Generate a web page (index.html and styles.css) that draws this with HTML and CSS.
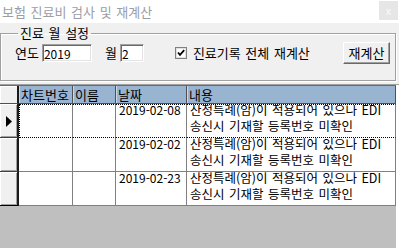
FILE: index.html
```html
<!DOCTYPE html>
<html lang="ko">
<head>
    <meta charset="UTF-8">
    <title>보험 진료비 검사 및 재계산</title>
    <link rel="stylesheet" href="styles.css">
</head>
<body>
    <div class="window">
        <div class="titlebar">
            <span class="title">보험 진료비 검사 및 재계산</span>
            <span class="close">x</span>
        </div>

        <fieldset class="group">
            <legend>진료 월 설정</legend>
            <div class="row">
                <label class="lbl" for="year">연도</label>
                <input type="text" id="year" class="field year" value="2019">
                <label class="lbl month-lbl" for="month">월</label>
                <input type="text" id="month" class="field month" value="2">
                <label class="check">
                    <svg width="12" height="12" viewBox="0 0 12 12">
                        <rect x="0.5" y="0.5" width="11" height="11" fill="#fff" stroke="#808080"/>
                        <rect x="1.5" y="1.5" width="9" height="9" fill="none" stroke="#e0e0e0"/>
                        <polyline points="3,5.5 5,7.8 9.2,3.2" fill="none" stroke="#000" stroke-width="1.8"/>
                    </svg>
                    <span>진료기록 전체 재계산</span>
                </label>
                <button class="btn">재계산</button>
            </div>
        </fieldset>

        <div class="gridwrap">
            <div class="gridarea">
                <div class="grid">
                    <div class="hcell corner"></div>
                    <div class="hcell">차트번호</div>
                    <div class="hcell">이름</div>
                    <div class="hcell">날짜</div>
                    <div class="hcell">내용</div>

                    <div class="ind">
                        <svg width="6" height="11" viewBox="0 0 6 11"><polygon points="0,0 6,5.5 0,11" fill="#000"/></svg>
                    </div>
                    <div class="cell focus sel"></div>
                    <div class="cell sel"></div>
                    <div class="cell sel"><div class="txt date">2019-02-08</div></div>
                    <div class="cell sel"><div class="txt">산정특례(암)이 적용되어 있으나 EDI<br>송신시 기재할 등록번호 미확인</div></div>

                    <div class="ind"></div>
                    <div class="cell"></div>
                    <div class="cell"></div>
                    <div class="cell"><div class="txt date">2019-02-02</div></div>
                    <div class="cell"><div class="txt">산정특례(암)이 적용되어 있으나 EDI<br>송신시 기재할 등록번호 미확인</div></div>

                    <div class="ind last"></div>
                    <div class="cell"></div>
                    <div class="cell"></div>
                    <div class="cell"><div class="txt date">2019-02-23</div></div>
                    <div class="cell"><div class="txt">산정특례(암)이 적용되어 있으나 EDI<br>송신시 기재할 등록번호 미확인</div></div>
                </div>
            </div>
        </div>
    </div>
</body>
</html>
```

FILE: styles.css
```css
* {
    box-sizing: border-box;
    margin: 0;
    padding: 0;
}

body {
    font-family: "Noto Sans CJK KR", "Liberation Sans", sans-serif;
    font-size: 13px;
    line-height: 16px;
    word-spacing: 1px;
    color: #000;
    background-color: #f0f0f0;
}

.window {
    width: 399px;
    height: 248px;
    overflow: hidden;
    display: flex;
    flex-direction: column;
}

/* title bar */
.titlebar {
    height: 23px;
    background: #fff;
    display: flex;
    align-items: center;
    justify-content: space-between;
    padding-left: 2px;
}

.title {
    color: #9a9ea6;
}

.close {
    width: 19px;
    height: 19px;
    margin: 0 1px 3px 0;
    align-self: flex-end;
    background: #e6e6e6;
    color: #fafafa;
    font-size: 11px;
    line-height: 18px;
    text-align: center;
}

/* group box */
.group {
    margin: 2px 3px 0 0;
    min-width: 0;
    border: 1px solid #a0a0a0;
    box-shadow: inset 1px 1px 0 #fff, 1px 1px 0 #fff;
    padding: 1px 5px 16px 14px;
}

.group legend {
    margin-left: 3px;
    padding: 0 2px;
    line-height: 16px;
}

.row {
    display: flex;
    align-items: center;
    height: 22px;
}

.month-lbl {
    margin-left: 13px;
}

.field {
    height: 18px;
    margin-left: 3px;
    padding: 0 1px;
    font-family: inherit;
    font-size: 12px;
    line-height: 14px;
    background: #fff;
    border-style: solid;
    border-width: 1px;
    border-color: #a0a0a0 #fff #fff #a0a0a0;
    box-shadow: inset 1px 1px 0 #696969, inset -1px -1px 0 #e3e3e3;
    outline: none;
}

.year {
    width: 50px;
}

.month {
    width: 24px;
}

.check {
    display: flex;
    align-items: center;
    margin-left: 31px;
}

.check svg {
    display: block;
    margin-right: 6px;
}

.btn {
    margin-left: auto;
    width: 47px;
    height: 22px;
    font: inherit;
    background: #f0f0f0;
    border-style: solid;
    border-width: 1px;
    border-color: #fff #696969 #696969 #fff;
    box-shadow: inset -1px -1px 0 #a0a0a0;
    padding-bottom: 1px;
}

/* data grid */
.gridwrap {
    flex: 1;
    margin-top: 3px;
    display: flex;
    background: #fff;
    border-top: 1px solid #a0a0a0;
}

.gridarea {
    width: 396px;
    background: #bfbfbf;
    border-top: 1px solid #696969;
}

.grid {
    display: grid;
    grid-template-columns: 19px 54px 43px 71px 209px;
    grid-template-rows: 18px 34px 34px 34px;
}

.hcell {
    background: #99b4d1;
    border-right: 1px solid #505050;
    border-bottom: 1px solid #505050;
    box-shadow: inset 1px 0 0 #c8d6e6;
    padding: 1px 0 0 2px;
    line-height: 16px;
    white-space: nowrap;
    overflow: hidden;
}

.hcell.corner {
    background: #f0f0f0;
    border-right: 2px solid #1a1a1a;
    box-shadow: inset 1px 1px 0 #fff;
}

.ind {
    background: #f0f0f0;
    border-right: 2px solid #1a1a1a;
    border-bottom: 1px solid #404040;
    box-shadow: inset 1px 1px 0 #fff, inset -1px -1px 0 #a0a0a0;
    display: flex;
    align-items: center;
    padding-left: 6px;
}

.ind svg {
    display: block;
    margin-top: 2px;
}

.ind.last {
    border-bottom-color: #000;
}

.cell {
    background: #fff;
    border-right: 1px solid #808080;
    border-bottom: 1px solid #808080;
    overflow: hidden;
    padding-left: 3px;
    white-space: nowrap;
}

.cell .txt {
    margin-top: -2px;
    font-size: 12.5px;
    line-height: 16px;
}

.cell .date {
    font-size: 12px;
}

.cell.sel {
    border-top: 1px dotted #000;
    border-bottom: 1px dotted #000;
}

.cell.sel .txt {
    margin-top: -3px;
}

.cell.focus {
    border-left: 1px dotted #000;
}
```
